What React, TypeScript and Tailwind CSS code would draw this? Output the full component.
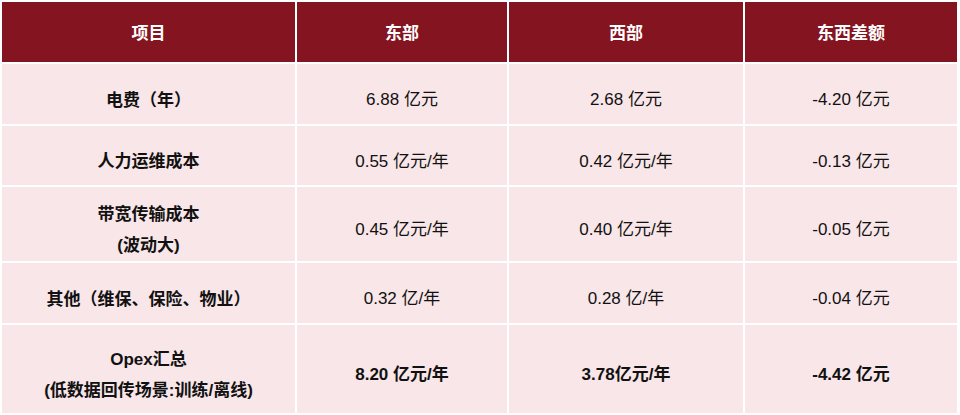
const headers = ['项目', '东部', '西部', '东西差额'];

type Row = {
  label: string[];
  values: string[];
  height: string;
  bold?: boolean;
};

const rows: Row[] = [
  { label: ['电费（年）'], values: ['6.88 亿元', '2.68 亿元', '-4.20 亿元'], height: 'h-[60px]' },
  { label: ['人力运维成本'], values: ['0.55 亿元/年', '0.42 亿元/年', '-0.13 亿元'], height: 'h-[59px]' },
  { label: ['带宽传输成本', '(波动大)'], values: ['0.45 亿元/年', '0.40 亿元/年', '-0.05 亿元'], height: 'h-[74px]' },
  { label: ['其他（维保、保险、物业）'], values: ['0.32 亿/年', '0.28 亿/年', '-0.04 亿元'], height: 'h-[60px]' },
  {
    label: ['Opex汇总', '(低数据回传场景:训练/离线)'],
    values: ['8.20 亿元/年', '3.78亿元/年', '-4.42 亿元'],
    height: 'h-[88px]',
    bold: true,
  },
];

const font = "font-['Liberation_Sans','Noto_Sans_CJK_SC',sans-serif]";

export default function App() {
  return (
    <div className={`w-[960px] h-[415px] bg-white pt-[2px] pl-[2px] ${font}`}>
      <div className="grid grid-cols-[293px_210px_234px_212px] gap-x-[2px] gap-y-[2px]">
        {headers.map((h) => (
          <div
            key={h}
            className="h-[60px] bg-[#84141f] flex items-center justify-center pt-[3px] text-white font-bold text-[17px]"
          >
            {h}
          </div>
        ))}
        {rows.map((r, i) => (
          <div key={i} className="contents">
            <div
              className={`${r.height} bg-[#f8e6e8] flex flex-col items-center justify-center pt-3 font-bold text-[17px] leading-[31px] text-[#111]`}
            >
              {r.label.map((l) => (
                <span key={l}>{l}</span>
              ))}
            </div>
            {r.values.map((v, j) => (
              <div
                key={j}
                className={`${r.height} bg-[#f8e6e8] flex items-center justify-center pt-3 text-[17px] text-[#111] ${
                  r.bold ? 'font-bold' : ''
                }`}
              >
                {v}
              </div>
            ))}
          </div>
        ))}
      </div>
    </div>
  );
}
